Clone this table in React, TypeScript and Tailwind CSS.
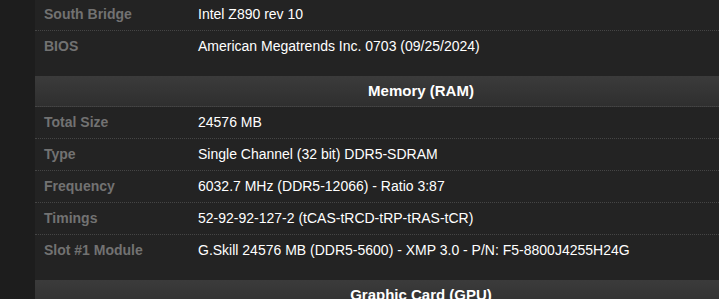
const sections = [
  {
    title: null as string | null,
    rows: [
      ["South Bridge", "Intel Z890 rev 10"],
      ["BIOS", "American Megatrends Inc. 0703 (09/25/2024)"],
    ],
  },
  {
    title: "Memory (RAM)",
    rows: [
      ["Total Size", "24576 MB"],
      ["Type", "Single Channel (32 bit) DDR5-SDRAM"],
      ["Frequency", "6032.7 MHz (DDR5-12066) - Ratio 3:87"],
      ["Timings", "52-92-92-127-2 (tCAS-tRCD-tRP-tRAS-tCR)"],
      ["Slot #1 Module", "G.Skill 24576 MB (DDR5-5600) - XMP 3.0 - P/N: F5-8800J4255H24G"],
    ],
  },
  {
    title: "Graphic Card (GPU)",
    rows: [],
  },
];

function Row({ label, value, last }: { label: string; value: string; last: boolean }) {
  return (
    <div
      className={`flex h-[31px] items-center ${last ? "" : "box-content border-b border-dotted border-[#454545]"}`}
    >
      <div className="w-[155px] shrink-0 pl-[9px] text-[14px] font-bold text-[#727272]">{label}</div>
      <div className="pl-[8px] text-[14px] text-white">{value}</div>
    </div>
  );
}

export default function App() {
  return (
    <div
      className="h-[299px] w-[719px] overflow-hidden bg-[#1d1d1d] pl-[35px]"
      style={{ fontFamily: '"Liberation Sans", Arial, sans-serif' }}
    >
      <div className="-mt-[1px] w-[772px] bg-[#232323]">
        {sections.map((s, i) => (
          <div key={i}>
            {s.title && (
              <div className="box-content flex h-[30px] items-center justify-center border-b border-dotted border-[#454545] bg-gradient-to-b from-[#3b3b3b] to-[#2f2f2f] text-[15px] font-bold text-white">
                {s.title}
              </div>
            )}
            {s.rows.length > 0 && (
              <div className="pb-[14px]">
                {s.rows.map((r, j) => (
                  <Row key={j} label={r[0]} value={r[1]} last={j === s.rows.length - 1} />
                ))}
              </div>
            )}
          </div>
        ))}
      </div>
    </div>
  );
}
